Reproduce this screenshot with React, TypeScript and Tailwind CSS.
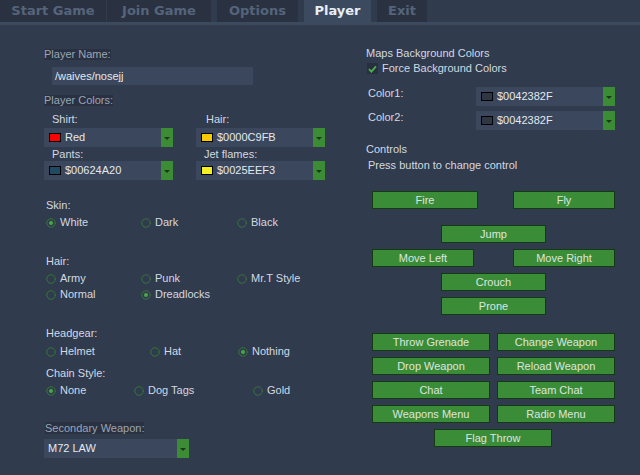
import React from 'react';

const FONT = { fontFamily: '"Liberation Sans", Arial, sans-serif' };

const tabs = [
  { label: 'Start Game', cls: 'w-[106px]' },
  { label: 'Join Game', cls: 'ml-[1px] w-[104px]' },
  { label: 'Options', cls: 'ml-[6px] w-[81px]' },
  { label: 'Player', cls: 'ml-[6px] w-[67px]', active: true },
  { label: 'Exit', cls: 'ml-[6px] w-[50px]' },
];

const Combo = ({ text, swatch, cls }: { text: string; swatch?: string; cls: string }) => (
  <div className={`flex h-[19px] items-center bg-[#3a475c] ${cls}`}>
    {swatch && <span className={`ml-[5px] h-[9px] w-[12px] border border-black ${swatch}`} />}
    <span className="ml-[4px] flex-1 text-[11px] leading-[13px] text-[#e4e9ef]">{text}</span>
    <span className="flex h-full w-[12px] items-center justify-center bg-[#3b8c34]">
      <span className="mt-[1px] h-0 w-0 border-x-[3px] border-t-[3px] border-x-transparent border-t-[#1d361d]" />
    </span>
  </div>
);

const Radio = ({ label, checked, cls }: { label: string; checked?: boolean; cls: string }) => (
  <div className={`flex h-[13px] items-center ${cls}`}>
    <svg width="10" height="10" viewBox="0 0 10 10" className="shrink-0">
      <circle cx="5" cy="5" r="4.2" fill="none" stroke="#3a8a36" strokeWidth="1" strokeDasharray="1.6 0.6" />
      {checked && <circle cx="5" cy="5" r="2" fill="#4aa844" />}
    </svg>
    <span className="ml-[4px] text-[11px] leading-[13px] text-[#d2d9e2]">{label}</span>
  </div>
);

const Btn = ({ label, cls }: { label: string; cls: string }) => (
  <div className={`flex h-[18px] items-center justify-center border border-[#153a15] bg-[#3b8c36] text-[11px] leading-[13px] text-[#dce6e0] ${cls}`}>
    {label}
  </div>
);

const Label = ({ children, cls = '' }: { children: React.ReactNode; cls?: string }) => (
  <div className={`text-[11px] leading-[13px] text-[#d2d9e2] ${cls}`}>{children}</div>
);

const BoxLabel = ({ children, cls = '' }: { children: React.ReactNode; cls?: string }) => (
  <div className={`w-fit bg-[#2a3141] text-[11px] leading-[11px] text-[#9ba6b5] ${cls}`}>{children}</div>
);

export default function App() {
  return (
    <div className="h-[475px] w-[640px] overflow-hidden bg-[#303b4d]" style={FONT}>
      {/* tab bar */}
      <div className="flex h-[22px] bg-[#303b4d]">
        {tabs.map(t => (
          <div
            key={t.label}
            className={`flex h-full items-center justify-center text-[13px] font-bold ${t.cls} ${
              t.active ? 'bg-[#3b4a5f] text-[#e8eef4]' : 'bg-[#2a3242] text-[#55647a]'
            }`}
            style={{ fontFamily: '"DejaVu Sans", sans-serif' }}
          >
            {t.label}
          </div>
        ))}
      </div>
      <div className="h-[3px] bg-[#3b4a5f]" />

      <div className="flex">
        {/* left panel */}
        <div className="flex w-[366px] flex-col pl-[44px]">
          <BoxLabel cls="mt-[24px]">Player Name:</BoxLabel>
          <div className="ml-[8px] mt-[7px] flex h-[18px] w-[201px] items-center bg-[#3a475c] pl-[3px] text-[11px] text-[#e4e9ef]">
            /waives/nosejj
          </div>
          <BoxLabel cls="mt-[10px]">Player Colors:</BoxLabel>

          <div className="mt-[7px] grid w-[281px] grid-cols-[129px_129px] gap-x-[23px]">
            <div className="flex flex-col">
              <Label cls="pl-[8px] leading-[12px]">Shirt:</Label>
              <Combo cls="mt-[2px] w-[129px]" swatch="bg-[#ff0000]" text="Red" />
              <Label cls="pl-[8px] mt-[1px] leading-[12px]">Pants:</Label>
              <Combo cls="w-[129px]" swatch="bg-[#204a62]" text="$00624A20" />
            </div>
            <div className="flex flex-col">
              <Label cls="pl-[10px] leading-[12px]">Hair:</Label>
              <Combo cls="mt-[2px] w-[129px]" swatch="bg-[#fbc900]" text="$0000C9FB" />
              <Label cls="pl-[8px] mt-[1px] leading-[12px]">Jet flames:</Label>
              <Combo cls="w-[129px]" swatch="bg-[#f3ee25]" text="$0025EEF3" />
            </div>
          </div>

          <Label cls="mt-[19px] pl-[2px]">Skin:</Label>
          <div className="mt-[4px] flex pl-[2px]">
            <Radio cls="w-[95px]" label="White" checked />
            <Radio cls="w-[96px]" label="Dark" />
            <Radio cls="" label="Black" />
          </div>

          <Label cls="mt-[26px] pl-[2px]">Hair:</Label>
          <div className="mt-[4px] flex pl-[2px]">
            <Radio cls="w-[95px]" label="Army" />
            <Radio cls="w-[96px]" label="Punk" />
            <Radio cls="" label="Mr.T Style" />
          </div>
          <div className="mt-[3px] flex pl-[2px]">
            <Radio cls="w-[95px]" label="Normal" />
            <Radio cls="w-[96px]" label="Dreadlocks" checked />
          </div>

          <Label cls="mt-[26px] pl-[2px]">Headgear:</Label>
          <div className="mt-[5px] flex pl-[2px]">
            <Radio cls="w-[104px]" label="Helmet" />
            <Radio cls="w-[88px]" label="Hat" />
            <Radio cls="" label="Nothing" checked />
          </div>

          <Label cls="mt-[9px] pl-[2px]">Chain Style:</Label>
          <div className="mt-[4px] flex pl-[2px]">
            <Radio cls="w-[88px]" label="None" checked />
            <Radio cls="w-[119px]" label="Dog Tags" />
            <Radio cls="" label="Gold" />
          </div>

          <BoxLabel cls="mt-[25px] ml-[1px] leading-[12px]">Secondary Weapon:</BoxLabel>
          <Combo cls="mt-[5px] w-[145px]" text="M72 LAW" />
        </div>

        {/* right panel */}
        <div className="flex flex-1 flex-col">
          <Label cls="mt-[22px]">Maps Background Colors</Label>
          <div className="mt-[2px] flex h-[13px] items-center pl-[1px]">
            <span className="flex h-[11px] w-[11px] items-center justify-center bg-[#283040]">
              <svg width="9" height="8" viewBox="0 0 9 8">
                <path d="M1 4.2 L3.4 6.6 L8 1.4" fill="none" stroke="#4cb04a" strokeWidth="1.8" />
              </svg>
            </span>
            <span className="ml-[4px] text-[11px] leading-[13px] text-[#d2d9e2]">Force Background Colors</span>
          </div>

          <div className="mt-[12px] flex items-start">
            <Label cls="w-[110px] pl-[2px]">Color1:</Label>
            <Combo cls="w-[139px]" swatch="bg-[#2f3842]" text="$0042382F" />
          </div>
          <div className="mt-[5px] flex items-start">
            <Label cls="w-[110px] pl-[2px]">Color2:</Label>
            <Combo cls="w-[139px]" swatch="bg-[#2f3842]" text="$0042382F" />
          </div>

          <Label cls="mt-[13px]">Controls</Label>
          <Label cls="mt-[3px] pl-[2px]">Press button to change control</Label>

          <div className="mt-[19px] flex pl-[6px]">
            <Btn cls="w-[106px]" label="Fire" />
            <Btn cls="ml-[35px] w-[102px]" label="Fly" />
          </div>
          <Btn cls="ml-[75px] mt-[16px] w-[105px]" label="Jump" />
          <div className="mt-[6px] flex pl-[6px]">
            <Btn cls="w-[102px]" label="Move Left" />
            <Btn cls="ml-[39px] w-[102px]" label="Move Right" />
          </div>
          <Btn cls="ml-[75px] mt-[6px] w-[105px]" label="Crouch" />
          <Btn cls="ml-[75px] mt-[6px] w-[105px]" label="Prone" />

          <div className="mt-[18px] grid w-[249px] grid-cols-[118px_118px] gap-x-[7px] gap-y-[6px] pl-[6px]">
            <Btn cls="" label="Throw Grenade" />
            <Btn cls="" label="Change Weapon" />
            <Btn cls="" label="Drop Weapon" />
            <Btn cls="" label="Reload Weapon" />
            <Btn cls="" label="Chat" />
            <Btn cls="" label="Team Chat" />
            <Btn cls="" label="Weapons Menu" />
            <Btn cls="" label="Radio Menu" />
          </div>
          <Btn cls="ml-[68px] mt-[6px] w-[118px]" label="Flag Throw" />
        </div>
      </div>
    </div>
  );
}
